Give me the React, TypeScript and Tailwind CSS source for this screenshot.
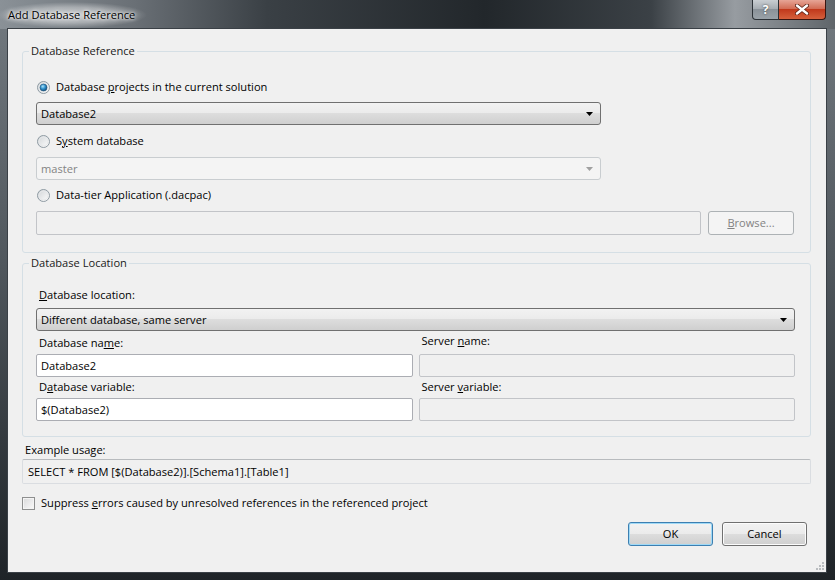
import { useId } from 'react';

const face = "font-['Open_Sans',sans-serif] text-[11.1px] leading-[16px]";

function Radio({ checked }: { checked?: boolean }) {
  const id = useId().replace(/:/g, '');
  return (
    <svg width="13" height="13" viewBox="0 0 13 13" className="shrink-0">
      <defs>
        <linearGradient id={`rb${id}`} x1="0" y1="0" x2="1" y2="1">
          <stop offset="0" stopColor="#cfd3d6" />
          <stop offset="1" stopColor="#ffffff" />
        </linearGradient>
        <radialGradient id={`rd${id}`} cx="0.4" cy="0.35" r="0.7">
          <stop offset="0" stopColor="#a8e3fb" />
          <stop offset="0.5" stopColor="#2f8fca" />
          <stop offset="1" stopColor="#0d4a7a" />
        </radialGradient>
      </defs>
      <circle cx="6.5" cy="6.5" r="6" fill={`url(#rb${id})`} stroke="#8e9aa2" />
      <circle cx="6.5" cy="6.5" r="4.5" fill="none" stroke="#e6e8ea" />
      {checked && <circle cx="6.5" cy="6.5" r="3.5" fill={`url(#rd${id})`} stroke="#1d4e74" strokeWidth="0.6" />}
    </svg>
  );
}

function Arrow({ color }: { color: string }) {
  return (
    <svg width="7" height="4" viewBox="0 0 7 4" className="shrink-0">
      <path d="M0 0h7L3.5 4z" fill={color} />
    </svg>
  );
}

function Combo({ value, disabled, width }: { value: string; disabled?: boolean; width: string }) {
  return (
    <div
      className={
        disabled
          ? `flex h-[23px] ${width} items-center justify-between rounded-[3px] border border-[#c9cdd0] bg-[#f4f4f4] pl-[4px] pr-[7px] text-[#838383]`
          : `flex h-[23px] ${width} items-center justify-between rounded-[3px] border border-[#707070] bg-[linear-gradient(#f2f2f2,#ebebeb_50%,#dddddd_50%,#cfcfcf)] pl-[4px] pr-[7px] text-black`
      }
    >
      <span>{value}</span>
      <Arrow color={disabled ? '#a0a0a0' : '#000000'} />
    </div>
  );
}

function TextBox({ value, disabled, className }: { value?: string; disabled?: boolean; className: string }) {
  return (
    <div
      className={`flex items-center rounded-[2px] border border-[#abadb3] pl-[4px] ${
        disabled ? 'border-[#c2c4c8] bg-[#f0f0f0]' : 'bg-white'
      } ${className}`}
    >
      {value}
    </div>
  );
}

function Button({ children, isDefault, disabled }: { children: React.ReactNode; isDefault?: boolean; disabled?: boolean }) {
  if (disabled) {
    return (
      <div className="flex h-[24px] w-[86px] items-center justify-center rounded-[3px] border border-[#adb2b5] bg-[#f4f4f4] text-[#838383]">
        {children}
      </div>
    );
  }
  return (
    <div
      className={`flex h-[24px] w-[85px] items-center justify-center rounded-[3px] border bg-[linear-gradient(#f2f2f2,#ebebeb_50%,#dddddd_50%,#cfcfcf)] text-black ${
        isDefault ? 'border-[#3c7fb1] shadow-[inset_0_0_0_1px_#9fd9f6]' : 'border-[#707070] shadow-[inset_0_0_0_1px_#fcfcfc]'
      }`}
    >
      {children}
    </div>
  );
}

export default function App() {
  return (
    <div className={`flex h-[580px] w-[835px] flex-col bg-[linear-gradient(#737a80,#50575d_45%,#1e2327)] ${face}`}>
      {/* title bar */}
      <div className="flex h-[29px] shrink-0 items-start bg-[linear-gradient(to_right,#8a9197_0%,#6a7076_16%,#3a4045_32%,#22272b_58%,#3b4146_78%,#979ca1_88%,#5f656a_100%)]">
        <div className="ml-[-4px] mt-[2px] rounded-[10px] bg-[radial-gradient(closest-side,rgba(255,255,255,0.6),rgba(255,255,255,0.35)_60%,rgba(255,255,255,0))] px-[12px] py-[5px] text-black [text-shadow:0_0_6px_#ffffff,0_0_3px_#ffffff]">
          Add Database Reference
        </div>
        <div className="ml-auto mr-[9px] flex">
          <div className="flex h-[20px] w-[27px] items-center justify-center rounded-bl-[4px] border border-t-0 border-[#2b3136] bg-[linear-gradient(#c9ced2,#a3aab0_50%,#8a9299_50%,#9aa2a8)] text-[12px] font-bold leading-none text-white [text-shadow:0_0_2px_#333]">
            ?
          </div>
          <div className="flex h-[20px] w-[47px] items-center justify-center rounded-br-[4px] border border-l-0 border-t-0 border-[#3a1510] bg-[linear-gradient(#e6a596,#d0674f_50%,#c1391c_50%,#d6603c)]">
            <svg width="14" height="11" viewBox="0 0 14 11">
              <path d="M2 1.5L12 9.5M12 1.5L2 9.5" stroke="#5a2015" strokeWidth="4" strokeLinecap="round" />
              <path d="M2 1.5L12 9.5M12 1.5L2 9.5" stroke="#ffffff" strokeWidth="2.4" strokeLinecap="round" />
            </svg>
          </div>
        </div>
      </div>

      {/* client area */}
      <div className="relative ml-[8px] flex h-[543px] w-[818px] flex-col bg-[#f0f0f0] pt-[14px] text-black shadow-[0_0_0_1px_#3a4046]">
        <fieldset className="ml-[14px] w-[789px] rounded-[3px] border border-[#d5dfe5] pb-[17px] pl-[13px] pr-[15px]">
          <legend className="-ml-[7px] px-[2px] leading-[16px] text-[#1a1a1a]">Database Reference</legend>
          <div className="ml-[1px] mt-[20px] flex h-[16px] items-center gap-[6px]">
            <Radio checked />
            <span>
              Database <u>p</u>rojects in the current solution
            </span>
          </div>
          <div className="mt-[7px]">
            <Combo value="Database2" width="w-[565px]" />
          </div>
          <div className="ml-[1px] mt-[8px] flex h-[16px] items-center gap-[6px]">
            <Radio />
            <span>
              S<u>y</u>stem database
            </span>
          </div>
          <div className="mt-[8px]">
            <Combo value="master" disabled width="w-[565px]" />
          </div>
          <div className="ml-[1px] mt-[7px] flex h-[16px] items-center gap-[6px]">
            <Radio />
            <span>Data-tier Application (.dacpac)</span>
          </div>
          <div className="mt-[8px] flex items-center gap-[7px]">
            <TextBox disabled className="h-[24px] w-[665px]" />
            <Button disabled>
              <span>
                <u>B</u>rowse...
              </span>
            </Button>
          </div>
        </fieldset>

        <fieldset className="ml-[14px] mt-[2px] w-[789px] rounded-[3px] border border-[#d5dfe5] pb-[15px] pl-[13px] pr-[15px]">
          <legend className="-ml-[7px] px-[2px] leading-[16px] text-[#1a1a1a]">Database Location</legend>
          <div className="ml-[3px] mt-[16px]">
            <u>D</u>atabase location:
          </div>
          <div className="mt-[5px]">
            <Combo value="Different database, same server" width="w-[759px]" />
          </div>
          <div className="mt-[4px] grid grid-cols-2 gap-x-[6px]">
            <div className="ml-[3px]">
              Database na<u>m</u>e:
            </div>
            <div className="ml-[3px] -mt-[2px]">
              Server <u>n</u>ame:
            </div>
            <TextBox value="Database2" className="mt-[3px] h-[23px]" />
            <TextBox disabled className="mt-[3px] h-[23px]" />
            <div className="ml-[3px] mt-[2px]">
              D<u>a</u>tabase variable:
            </div>
            <div className="ml-[3px] mt-[2px]">
              Server <u>v</u>ariable:
            </div>
            <TextBox value="$(Database2)" className="mt-[3px] h-[23px]" />
            <TextBox disabled className="mt-[3px] h-[23px]" />
          </div>
        </fieldset>

        <div className="ml-[17px] mt-[5px]">Example usage:</div>
        <div className="ml-[14px] mt-[1px] flex h-[25px] w-[789px] items-center rounded-[2px] border border-[#dadde1] border-t-[#b8bbbe] pl-[5px]">
          SELECT * FROM [$(Database2)].[Schema1].[Table1]
        </div>

        <div className="ml-[14px] mt-[11px] flex h-[16px] items-center gap-[6px]">
          <div className="h-[13px] w-[13px] border border-[#8e8f8f] bg-[linear-gradient(135deg,#d9dadb,#fafafa)] shadow-[inset_0_0_0_1px_#f4f4f4]" />
          <span>
            Suppress <u>e</u>rrors caused by unresolved references in the referenced project
          </span>
        </div>

        <div className="mr-[19px] mt-[11px] flex justify-end gap-[9px]">
          <Button isDefault>OK</Button>
          <Button>Cancel</Button>
        </div>

        <svg width="8" height="8" viewBox="0 0 8 8" className="absolute bottom-[2px] right-[2px]">
          {[
            [6, 0],
            [6, 3],
            [3, 3],
            [6, 6],
            [3, 6],
            [0, 6],
          ].map(([x, y]) => (
            <rect key={`${x}-${y}`} x={x} y={y} width="2" height="2" fill="#b9bcbf" />
          ))}
        </svg>
      </div>
    </div>
  );
}
